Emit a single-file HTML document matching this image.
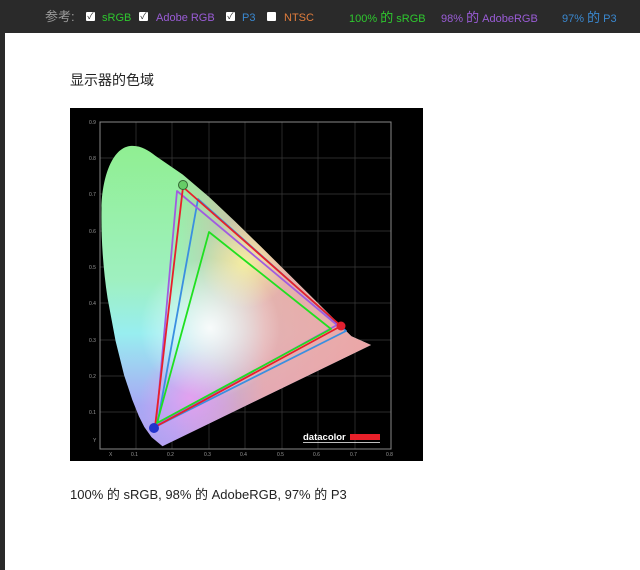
<!DOCTYPE html>
<html><head><meta charset="utf-8"><style>
html,body{margin:0;padding:0}
body{width:640px;height:570px;background:#fff;position:relative;overflow:hidden;font-family:"Liberation Sans","Noto Sans CJK SC",sans-serif}
#bar{position:absolute;left:0;top:0;width:640px;height:33px;background:#2a2a2a}
#strip{position:absolute;left:0;top:0;width:5px;height:570px;background:#2a2a2a}
#bar span{position:absolute;top:11px;font-size:11px;line-height:14px;white-space:nowrap}
.cb{position:absolute;top:12px;width:9px;height:9px;background:#fff;border-radius:1px;font-size:9px;line-height:9px;color:#333;text-align:center}
#title{position:absolute;left:70px;top:70px;font-size:14px;color:#222}
#cap{position:absolute;left:70px;top:484px;font-size:13px;color:#222}
#chart{position:absolute;left:70px;top:108px}
</style></head><body>
<div id="bar">
<span style="left:45px;color:#9a9a9a;font-size:13px;top:10px">参考:</span>
<div class="cb" style="left:86px">✓</div><span style="left:102px;color:#2ec82e">sRGB</span>
<div class="cb" style="left:139px">✓</div><span style="left:156px;color:#9a5cd6">Adobe RGB</span>
<div class="cb" style="left:226px">✓</div><span style="left:242px;color:#3a88d0">P3</span>
<div class="cb" style="left:267px"></div><span style="left:284px;color:#e07c3c">NTSC</span>
<span style="left:349px;color:#2ec82e">100% <b style="font-size:13px;font-weight:normal">的</b> sRGB</span>
<span style="left:441px;color:#9a5cd6">98% <b style="font-size:13px;font-weight:normal">的</b> AdobeRGB</span>
<span style="left:562px;color:#3a88d0">97% <b style="font-size:13px;font-weight:normal">的</b> P3</span>
</div>
<div id="strip"></div>
<div id="title">显示器的色域</div>
<svg id="chart" width="353" height="353" viewBox="0 0 353 353">
<defs>
<linearGradient id="gv" x1="0" y1="0" x2="0" y2="1">
<stop offset="0" stop-color="#8fef8f"/><stop offset="0.45" stop-color="#9ff0c0"/><stop offset="0.62" stop-color="#98eef0"/><stop offset="0.85" stop-color="#a8a8f4"/><stop offset="1" stop-color="#b8a0f0"/></linearGradient>
<linearGradient id="gh" x1="0" y1="0" x2="1" y2="0">
<stop offset="0.3" stop-color="#f0a0a8" stop-opacity="0"/><stop offset="0.55" stop-color="#f0a8a8" stop-opacity="0.85"/><stop offset="1" stop-color="#f0a0a0"/></linearGradient>
<radialGradient id="gw" cx="140" cy="220" r="70" gradientUnits="userSpaceOnUse"><stop offset="0" stop-color="#fff" stop-opacity="0.9"/><stop offset="1" stop-color="#fff" stop-opacity="0"/></radialGradient>
<radialGradient id="gy" cx="175" cy="155" r="45" gradientUnits="userSpaceOnUse"><stop offset="0" stop-color="#f8f4a0" stop-opacity="0.9"/><stop offset="1" stop-color="#f8f4a0" stop-opacity="0"/></radialGradient>
<radialGradient id="gp" cx="120" cy="290" r="50" gradientUnits="userSpaceOnUse"><stop offset="0" stop-color="#e8a0f0" stop-opacity="0.9"/><stop offset="1" stop-color="#e8a0f0" stop-opacity="0"/></radialGradient>
<clipPath id="cl"><path d="M92.5,338.2 L81.6,329.2 L74.3,319.0 L69.0,308.5 L62.3,291.9 L54.1,267.2 L45.6,233.1 L37.6,190.4 C33,160 31,130 31.5,100 C32,70 42,40 60,38 C70,37 78,42 85.5,47.9 L112.8,66.6 L139.1,89.0 L165.2,113.6 L191.1,138.9 L216.1,163.6 L239.0,186.2 L257.9,205.0 L281.4,228.2 L301,237 Z"/></clipPath>
</defs>
<rect width="353" height="353" fill="#000"/>
<g stroke="#3a3a3a" stroke-width="0.7">
<line x1="66" y1="14" x2="66" y2="341"/><line x1="102" y1="14" x2="102" y2="341"/><line x1="139" y1="14" x2="139" y2="341"/><line x1="175" y1="14" x2="175" y2="341"/><line x1="212" y1="14" x2="212" y2="341"/><line x1="248" y1="14" x2="248" y2="341"/><line x1="285" y1="14" x2="285" y2="341"/>
<line x1="30" y1="50" x2="321" y2="50"/><line x1="30" y1="86" x2="321" y2="86"/><line x1="30" y1="123" x2="321" y2="123"/><line x1="30" y1="159" x2="321" y2="159"/><line x1="30" y1="195" x2="321" y2="195"/><line x1="30" y1="232" x2="321" y2="232"/><line x1="30" y1="268" x2="321" y2="268"/><line x1="30" y1="304" x2="321" y2="304"/>
</g>
<rect x="30" y="14" width="291" height="327" fill="none" stroke="#888" stroke-width="1"/>
<g clip-path="url(#cl)">
<rect x="0" y="30" width="353" height="315" fill="url(#gv)"/>
<rect x="0" y="30" width="353" height="315" fill="url(#gh)"/>
<rect width="353" height="353" fill="url(#gy)"/>
<rect width="353" height="353" fill="url(#gp)"/>
<rect width="353" height="353" fill="url(#gw)"/>
</g>
<g fill="none" stroke-width="1.8" stroke-linejoin="round">
<polygon points="128,91 276,223 87,318" stroke="#3a8fe0"/>
<polygon points="107,83 267,217 86,317" stroke="#a05ce0"/>
<polygon points="113,79 271,218 85,319" stroke="#e8202a"/>
<polygon points="139,124 261,221 87,315" stroke="#20e020"/>
</g>
<circle cx="113" cy="77" r="4.5" fill="#6c6" stroke="#363" stroke-width="1"/>
<circle cx="271" cy="218" r="4.5" fill="#e02030"/>
<circle cx="84" cy="320" r="5" fill="#2233cc"/>
<g fill="#999" font-size="5" font-family="Liberation Sans,sans-serif">
<text x="19" y="16">0.9</text><text x="19" y="52">0.8</text><text x="19" y="88">0.7</text><text x="19" y="125">0.6</text><text x="19" y="161">0.5</text><text x="19" y="197">0.4</text><text x="19" y="234">0.3</text><text x="19" y="270">0.2</text><text x="19" y="306">0.1</text><text x="23" y="334">Y</text>
<text x="39" y="348">X</text><text x="61" y="348">0.1</text><text x="97" y="348">0.2</text><text x="134" y="348">0.3</text><text x="170" y="348">0.4</text><text x="207" y="348">0.5</text><text x="243" y="348">0.6</text><text x="280" y="348">0.7</text><text x="316" y="348">0.8</text>
</g>
<text x="233" y="332" fill="#fff" font-size="9.5" font-weight="bold" font-family="Liberation Sans,sans-serif">datacolor</text>
<rect x="280" y="326" width="30" height="6" fill="#e8202a"/>
<line x1="233" y1="334.5" x2="310" y2="334.5" stroke="#fff" stroke-width="0.8"/>
</svg>
<div id="cap">100% 的 sRGB, 98% 的 AdobeRGB, 97% 的 P3</div>
</body></html>
